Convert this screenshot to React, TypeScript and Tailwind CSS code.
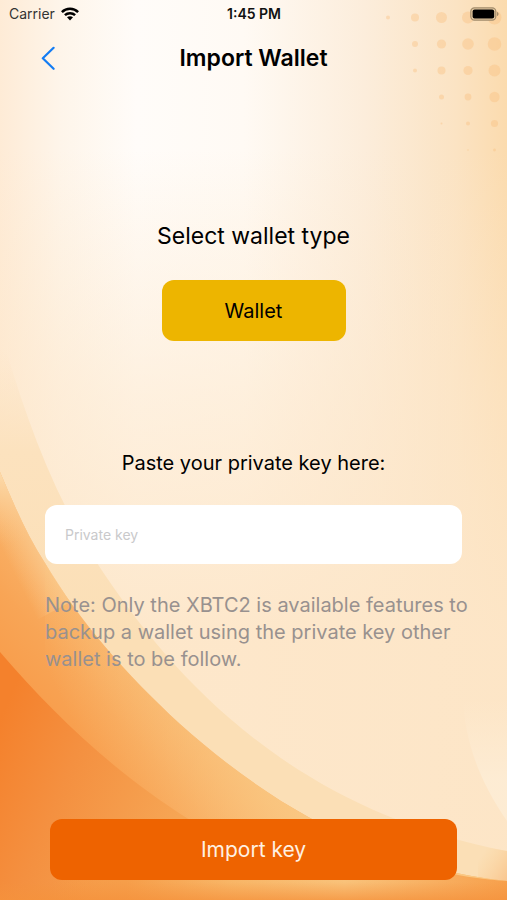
import { useState } from 'react'

// columns of the halftone corner, radius per dot from top to bottom
const dots = [
  { x: 388, radii: [2] },
  { x: 415, radii: [4, 3, 2] },
  { x: 441.5, radii: [5.5, 4.6, 4, 2.5, 1] },
  { x: 468, radii: [6, 5.8, 4.6, 3.4, 2, 0.8] },
  { x: 494.5, radii: [7, 6.8, 6, 5.2, 3.6, 1.4] },
]

const Background = () => (
  <svg
    className="absolute inset-0 -z-10 h-full w-full"
    viewBox="0 0 507 900"
    preserveAspectRatio="none"
    aria-hidden="true"
  >
    <defs>
      <linearGradient id="base" x1="0" y1="0" x2="507" y2="0" gradientUnits="userSpaceOnUse">
        <stop offset="0" stopColor="#feebd6" />
        <stop offset="0.12" stopColor="#fef5ea" />
        <stop offset="0.27" stopColor="#fffcf9" />
        <stop offset="0.48" stopColor="#fffaf4" />
        <stop offset="0.72" stopColor="#fceddb" />
        <stop offset="0.9" stopColor="#fbe3c3" />
        <stop offset="1" stopColor="#fbdbae" />
      </linearGradient>
      <linearGradient id="warm" x1="0" y1="150" x2="0" y2="640" gradientUnits="userSpaceOnUse">
        <stop offset="0" stopColor="#fde7ca" stopOpacity="0" />
        <stop offset="0.5" stopColor="#fde7ca" stopOpacity="0.55" />
        <stop offset="1" stopColor="#fde6c8" stopOpacity="0.95" />
      </linearGradient>
      <linearGradient id="outer" x1="0" y1="350" x2="0" y2="640" gradientUnits="userSpaceOnUse">
        <stop offset="0" stopColor="#fce3c2" stopOpacity="0" />
        <stop offset="0.35" stopColor="#fce2be" />
        <stop offset="1" stopColor="#fbdfb6" />
      </linearGradient>
      <linearGradient id="middle" x1="0" y1="680" x2="90" y2="600" gradientUnits="userSpaceOnUse">
        <stop offset="0" stopColor="#f89c4a" />
        <stop offset="0.5" stopColor="#f8a556" />
        <stop offset="1" stopColor="#f9b46b" />
      </linearGradient>
      <linearGradient id="middleTop" x1="0" y1="545" x2="30" y2="530" gradientUnits="userSpaceOnUse">
        <stop offset="0" stopColor="#fbd29b" stopOpacity="0" />
        <stop offset="1" stopColor="#fbd29b" />
      </linearGradient>
      <linearGradient id="middleTip" x1="0" y1="470" x2="0" y2="545" gradientUnits="userSpaceOnUse">
        <stop offset="0" stopColor="#fcdcae" />
        <stop offset="1" stopColor="#fbbf7c" stopOpacity="0" />
      </linearGradient>
      <linearGradient id="middleRight" x1="90" y1="760" x2="260" y2="680" gradientUnits="userSpaceOnUse">
        <stop offset="0" stopColor="#f9c680" stopOpacity="0" />
        <stop offset="1" stopColor="#fac984" />
      </linearGradient>
      <linearGradient id="inner" x1="0" y1="720" x2="190" y2="800" gradientUnits="userSpaceOnUse">
        <stop offset="0" stopColor="#f4812c" />
        <stop offset="0.4" stopColor="#f49040" />
        <stop offset="1" stopColor="#f6a655" />
      </linearGradient>
      <linearGradient id="foot" x1="0" y1="0" x2="507" y2="0" gradientUnits="userSpaceOnUse">
        <stop offset="0.1" stopColor="#f69a45" stopOpacity="0" />
        <stop offset="0.25" stopColor="#f69e4a" />
        <stop offset="0.45" stopColor="#f8b566" />
        <stop offset="0.68" stopColor="#f9c27a" />
        <stop offset="0.85" stopColor="#f8b062" />
        <stop offset="1" stopColor="#f7a04c" />
      </linearGradient>
      <linearGradient id="footShade" x1="0" y1="882" x2="0" y2="900" gradientUnits="userSpaceOnUse">
        <stop offset="0" stopColor="#f5923c" stopOpacity="0" />
        <stop offset="1" stopColor="#f5923c" stopOpacity="0.75" />
      </linearGradient>
      <linearGradient id="corner" x1="478" y1="860" x2="507" y2="880" gradientUnits="userSpaceOnUse">
        <stop offset="0" stopColor="#fad29a" stopOpacity="0" />
        <stop offset="1" stopColor="#f9c690" />
      </linearGradient>
      <linearGradient id="shine" x1="0" y1="700" x2="0" y2="780" gradientUnits="userSpaceOnUse">
        <stop offset="0" stopColor="#fdebd2" stopOpacity="0" />
        <stop offset="1" stopColor="#fdecd4" stopOpacity="0.95" />
      </linearGradient>
    </defs>

    <rect width="507" height="900" fill="url(#base)" />
    <rect width="507" height="900" fill="url(#warm)" />
    {dots.map((column) =>
      column.radii.map((r, row) => (
        <circle
          key={`${column.x}-${row}`}
          cx={column.x}
          cy={17.5 + row * 26.5}
          r={r}
          fill="#f9bd7c"
          opacity="0.38"
        />
      ))
    )}
    <path d="M463 700C465 735 475 775 507 821V700Z" fill="url(#shine)" />
    <path
      d="M0 330C22 405 48 485 97 563C170 675 290 810 507 851V900H0Z"
      fill="url(#outer)"
    />
    <path d="M478 846L507 851V885H478Z" fill="url(#corner)" />
    <path
      d="M0 472C14 505 27 535 45 563C80 622 125 673 180 724C265 800 370 866 507 881V900H0Z"
      fill="url(#middle)"
    />
    <path
      d="M0 472C14 505 27 535 45 563L70 602L0 640Z"
      fill="url(#middleTop)"
      opacity="0.6"
    />
    <path d="M0 472C14 505 27 535 45 563H0Z" fill="url(#middleTip)" />
    <path
      d="M45 563C80 622 125 673 180 724C265 800 370 866 507 881V900H45Z"
      fill="url(#middleRight)"
    />
    <path d="M0 652C55 716 115 773 190 820C225 842 260 862 300 878V900H0Z" fill="url(#inner)" />
    <path d="M40 868H430C455 876 480 879 507 881V900H40Z" fill="url(#foot)" />
    <path d="M0 878H507V900H0Z" fill="url(#footShade)" />
  </svg>
)

const StatusBar = () => (
  <div className="grid h-7 grid-cols-3 items-center pr-2 pl-[9px] text-sm">
    <div className="flex items-center gap-[6px] text-[#333]">
      <span>Carrier</span>
      <svg width="18" height="14" viewBox="0 0 18 14" aria-hidden="true">
        <g fill="none" stroke="#000" strokeWidth="2.5">
          <path d="M0.9 5.1C5.4 0.7 12.6 0.7 17.1 5.1" />
          <path d="M3.9 8.2C6.7 5.5 11.3 5.5 14.1 8.2" />
        </g>
        <path d="M6 10.3C7.7 8.8 10.3 8.8 12 10.3L9 13.5Z" />
      </svg>
    </div>
    <span className="text-center font-semibold text-[#111]">1:45 PM</span>
    <svg className="justify-self-end" width="29" height="14" viewBox="0 0 29 14" aria-hidden="true">
      <rect x="0.8" y="0.8" width="25" height="12.4" rx="3.6" fill="#e8cda4" stroke="#a28c6c" strokeWidth="1.2" />
      <rect x="2.6" y="2.6" width="21.6" height="8.8" rx="2" />
      <path d="M27 5C29 5.4 29 8.6 27 9Z" fill="#a28c6c" />
    </svg>
  </div>
)

const App = () => {
  const [privateKey, setPrivateKey] = useState('')

  return (
    <main className="relative isolate flex min-h-screen flex-col overflow-hidden font-['Inter',sans-serif] text-black">
      <Background />
      <StatusBar />

      <header className="grid h-[60px] grid-cols-[1fr_auto_1fr] items-center px-10">
        <button type="button" aria-label="Back" className="justify-self-start">
          <svg width="16" height="24" viewBox="0 0 16 24" fill="none" aria-hidden="true">
            <path
              d="M13.6 1.8L2.8 12.3L13.6 22.8"
              stroke="#137cf3"
              strokeWidth="2.2"
              strokeLinecap="round"
              strokeLinejoin="round"
            />
          </svg>
        </button>
        <h1 className="text-[23px] font-semibold">Import Wallet</h1>
      </header>

      <section className="mt-[130px] flex flex-col items-center gap-[26px]">
        <h2 className="text-[23px] leading-9">Select wallet type</h2>
        <button type="button" className="h-[61px] w-[184px] rounded-xl bg-[#edb500] text-xl">
          Wallet
        </button>
      </section>

      <form
        className="flex grow flex-col px-[45px] pt-[108px] pb-5"
        onSubmit={(e) => e.preventDefault()}
      >
        <label htmlFor="private-key" className="text-center text-xl leading-7">
          Paste your private key here:
        </label>
        <input
          id="private-key"
          type="text"
          placeholder="Private key"
          value={privateKey}
          onChange={(e) => setPrivateKey(e.target.value)}
          className="mt-7 h-[59px] rounded-xl bg-white px-5 text-sm outline-none placeholder:text-[#c9c9cb]"
        />
        <p className="mt-7 -mr-3 text-xl leading-[27px] text-[#98918f]">
          Note: Only the XBTC2 is available features to backup a wallet using the private key other
          wallet is to be follow.
        </p>
        <button
          type="submit"
          className="mx-[5px] mt-auto h-[61px] rounded-xl bg-[#ee6300] text-[21px] text-[#fff1e2]"
        >
          Import key
        </button>
      </form>
    </main>
  )
}

export default App
